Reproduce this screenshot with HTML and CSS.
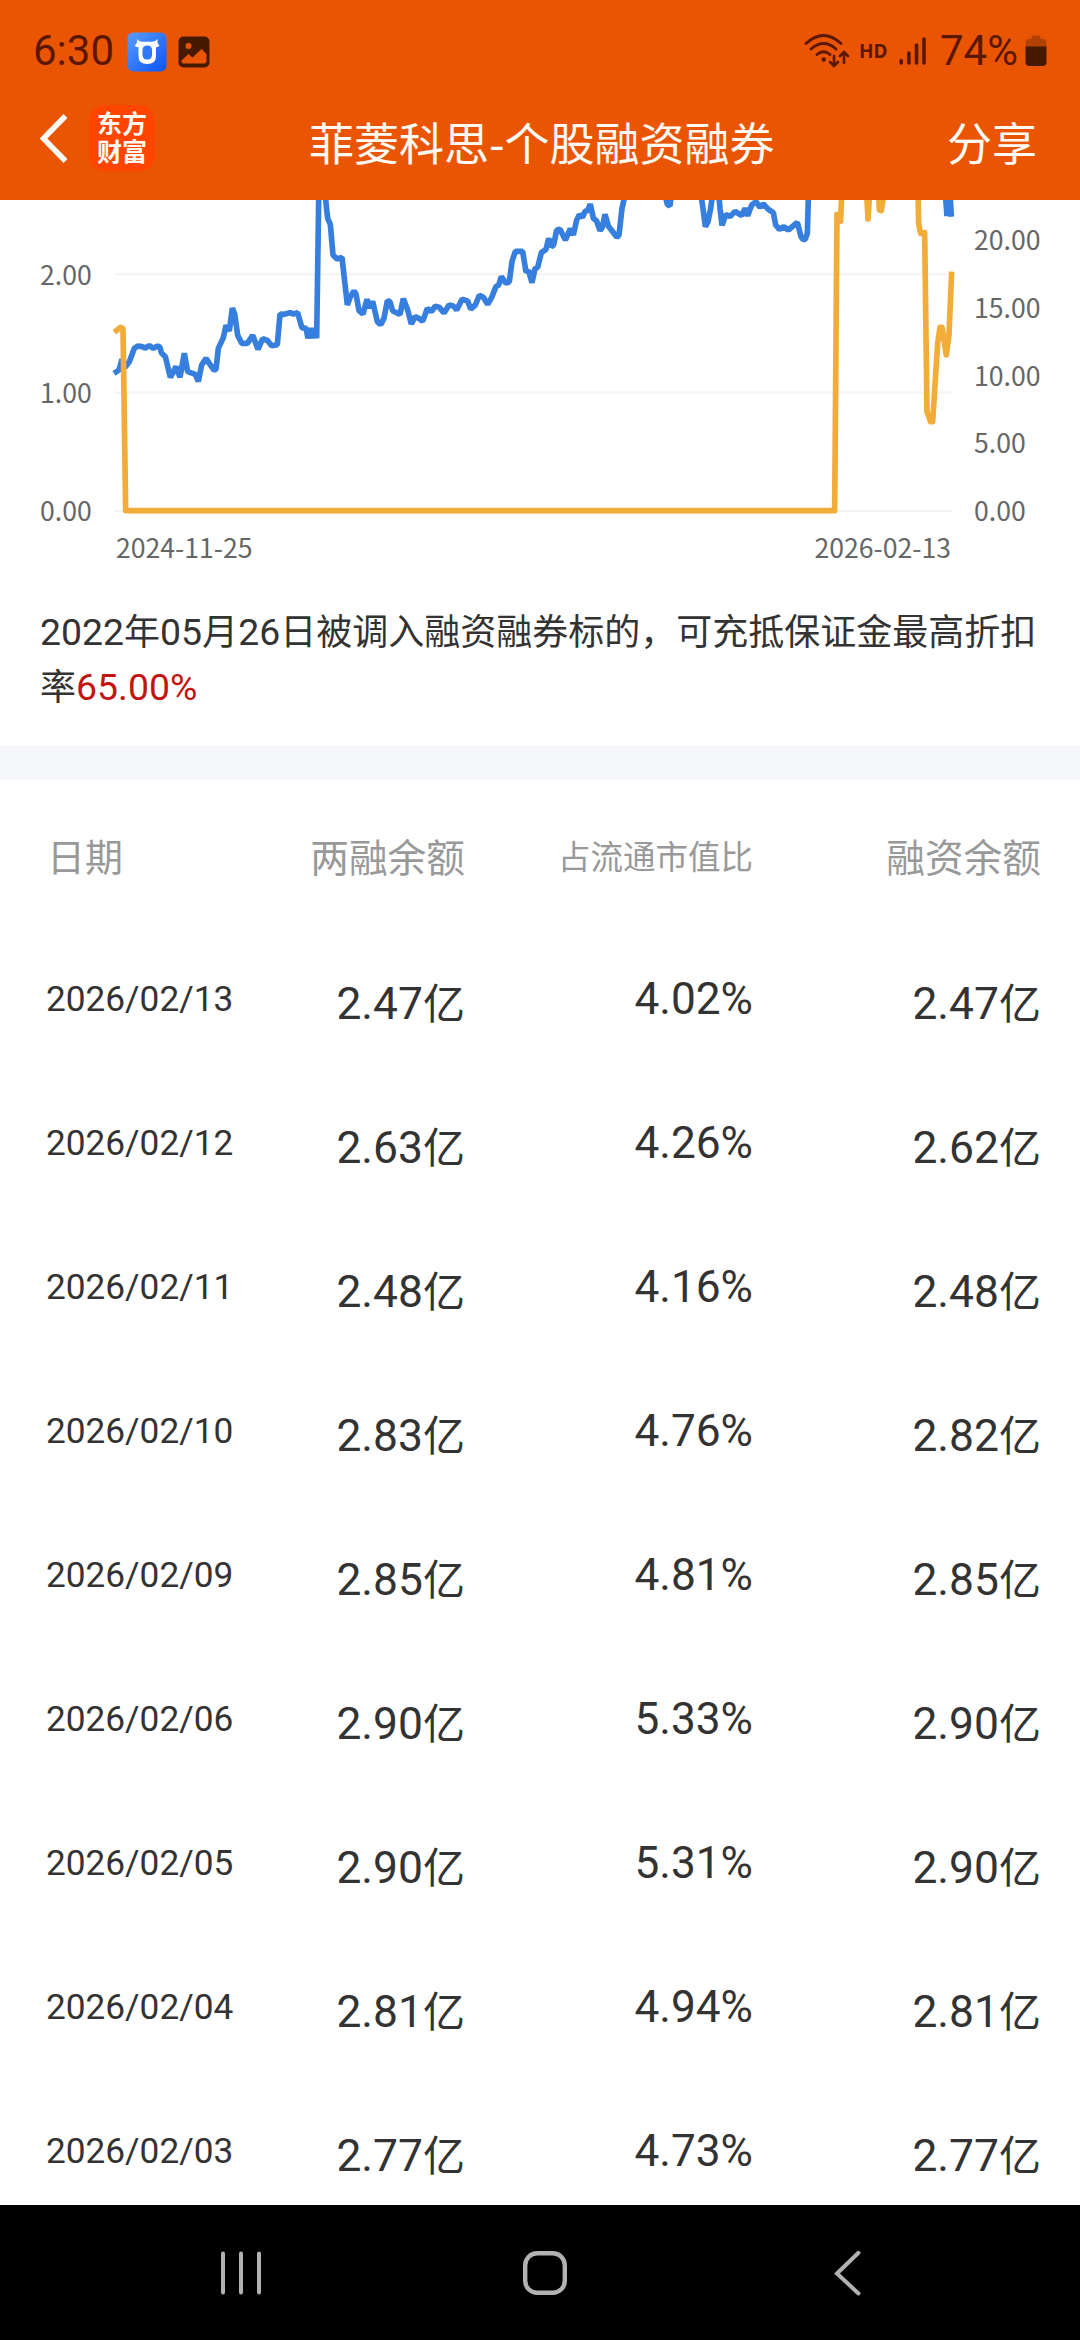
FILE: index.html
```html
<!DOCTYPE html>
<html lang="zh-CN">
<head>
<meta charset="utf-8">
<title>菲菱科思-个股融资融券</title>
<link rel="stylesheet" href="styles.css">
</head>
<body>
<div class="screen">
  <header class="top">
    <div class="status">
      <span class="clock">6:30</span>
      <svg class="app-badge" width="40" height="40" viewBox="0 0 40 40">
        <defs><linearGradient id="badge" x1="0" y1="0" x2="1" y2="1"><stop offset="0" stop-color="#5a9cff"/><stop offset="1" stop-color="#0a54f5"/></linearGradient></defs>
        <rect x="0.5" y="0.5" width="39" height="39" rx="6" fill="url(#badge)"/>
        <path d="M7.500 13.500Q10.500 12 10 7q1.500 2.500 5 2.800h10Q28.500 9.500 30.500 7q-.5 5 2 6.500-1.500 2-3.500 1.800v8.700q0 8-8.800 8T11.500 24v-8.700q-2.500.2-4-1.800z" fill="#fff"/>
        <rect x="15.500" y="13.500" width="9.500" height="14" rx="4.200" fill="#2f78fa"/>
      </svg>
      <svg class="photo" width="32" height="32" viewBox="0 0 32 32">
        <rect x="0.500" y="0.500" width="31" height="31" rx="5" fill="#471a00"/>
        <circle cx="10.500" cy="10" r="3" fill="#ea5504"/>
        <path d="M3.500 24.500 10.500 18l4 3.500L23.500 13l5 5v7.500q0 2-2 2h-21q-2 0-2-3z" fill="#ea5504"/>
      </svg>
      <span class="spacer"></span>
      <svg class="wifi" width="46" height="36" viewBox="0 0 46 36" fill="none" stroke="#5c1700" stroke-width="2.800" stroke-linecap="round">
        <path d="M2 10.500Q19.500-5.500 37 10.500M7 16q12.500-11 25 0M13 21.500q6.500-5.500 13 0"/>
        <circle cx="19.700" cy="26.500" r="2.300" fill="#5c1700" stroke="none"/>
        <path d="M30 23v9.500M26 29l4 4 4-4M40 30V20M36 23l4-4 4 4" stroke-width="2.600"/>
      </svg>
      <span class="hd">HD</span>
      <svg class="signal" width="28" height="30" viewBox="0 0 28 30" stroke="#5c1700" stroke-width="3.600" stroke-linecap="round">
        <path d="M2.200 24.500v2.500M9.900 17v10M17.500 9v18M25 3v24"/>
      </svg>
      <span class="percent">74%</span>
      <svg class="battery" width="22" height="32" viewBox="0 0 22 32">
        <path d="M6.500 4V2.500q0-2 2-2h5q2 0 2 2V4h2q4 0 4 4v4H.500V8q0-4 4-4z" fill="#b24100"/>
        <path d="M.5 11.500h21V27q0 4-4 4h-13q-4 0-4-4z" fill="#471a00"/>
      </svg>
    </div>
    <div class="nav">
      <svg class="back" width="30" height="52" viewBox="0 0 30 52" fill="none" stroke="#fffaf4" stroke-width="5.500"><path d="M27.500 4 5.500 26.500 27.500 49"/></svg>
      <div class="logo"><span>东方</span><span>财富</span></div>
      <h1 class="title">菲菱科思-个股融资融券</h1>
      <span class="share">分享</span>
    </div>
  </header>

  <section class="chart">
    <div class="axis axis-left"><span>2.00</span><span>1.00</span><span>0.00</span></div>
    <svg class="plot" width="860" height="331" viewBox="0 30 2580 993" fill="none">
      <path d="M43 253H2556M43 607.500H2556M43 963H2556" stroke="#f4f4f4" stroke-width="6"/>
      <g stroke="#367fde" stroke-width="17" stroke-linejoin="bevel">
        <path d="M42 550 57 540 66 508 75 532 88 515 103 475 113 468 126 470 136 474 148 467 160 475 173 468 180 472 184 488 196 500 211 562 228 530 240 562 253 490 263 545 286 553 295 574 305 525 318 505 330 523 342 540 348 538 355 475 370 443 378 406 388 423 397 354 404 372 413 436 425 460 442 460 458 436 474 478 488 446 503 452 515 467 532 464 540 372 552 373 570 368 580 372 593 368 606 414 618 414 624 445 632 414 638 445 644 414 650 445 656 30 662-60 672-60 678 40 683 85 691 103 699 195 711 207 726 202 742 345 751 320 762 303 768 312 777 362 789 372 801 328 809 354 818 334 832 395 842 404 852 385 862 332 870 335 878 363 900 373 910 326 923 360 934 402 945 380 958 386 968 394 982 355 994 365 1005 349 1018 352 1032 369 1047 345 1060 348 1070 360 1086 328 1103 333 1112 357 1126 345 1138 316 1150 322 1163 343 1175 322 1188 290 1196 285 1204 260 1218 280 1228 275 1236 215 1246 184 1268 184 1278 246 1286 242 1296 278 1305 236 1313 232 1324 188 1338 178 1346 145 1354 170 1361 165 1370 120 1380 118 1396 150 1411 116 1420 135 1430 90 1438 74 1447 82 1456 63 1463 62 1471 42 1480 85 1490 93 1500 122 1507 112 1515 73 1525 108 1538 125 1551 142 1557 135 1566 55 1580-5"/>
        <path d="M1695 15 1702 43 1710 48 1714 15M1802 10 1809 55 1816 110 1824 95 1832 55 1838 10M1856 10 1860 55 1866 106 1878 73 1890 80 1905 64 1925 77 1935 55 1943 77 1955 45 1968 35 1980 52 1990 42 2005 58 2020 68 2027 105 2038 118 2052 110 2065 120 2092 97 2103 140 2110 150 2116 147 2122 130 2126-10M2536 10 2541 78 2547 10 2554 80 2550 10"/>
      </g>
      <path d="M43 427 62 412 69 416 77 962H2204L2211 73 2222 94 2225 10M2300 10 2304 87 2309 10M2336 10 2338 60 2344 62 2352 10M2454 10 2456 100 2462 130 2474 128 2481 665 2492 695 2498 695 2513 460 2520 412 2526 412 2539 495 2547 435 2555 245" stroke="#f2ac38" stroke-width="17" stroke-linejoin="round"/>
    </svg>
    <div class="axis axis-right"><span>20.00</span><span>15.00</span><span>10.00</span><span>5.00</span><span>0.00</span></div>
  </section>
  <div class="dates"><span>2024-11-25</span><span>2026-02-13</span></div>

  <p class="note"><b>2022</b>年<b>05</b>月<b>26</b>日被调入融资融券标的，可充抵保证金最高折扣率<b class="red">65.00%</b></p>

  <section class="table">
    <div class="row head"><span>日期</span><span>两融余额</span><span class="small">占流通市值比</span><span>融资余额</span></div>
    <div class="row"><span class="date">2026/02/13</span><span class="amount">2.47<i>亿</i></span><span class="rate">4.02%</span><span class="amount">2.47<i>亿</i></span></div>
    <div class="row"><span class="date">2026/02/12</span><span class="amount">2.63<i>亿</i></span><span class="rate">4.26%</span><span class="amount">2.62<i>亿</i></span></div>
    <div class="row"><span class="date">2026/02/11</span><span class="amount">2.48<i>亿</i></span><span class="rate">4.16%</span><span class="amount">2.48<i>亿</i></span></div>
    <div class="row"><span class="date">2026/02/10</span><span class="amount">2.83<i>亿</i></span><span class="rate">4.76%</span><span class="amount">2.82<i>亿</i></span></div>
    <div class="row"><span class="date">2026/02/09</span><span class="amount">2.85<i>亿</i></span><span class="rate">4.81%</span><span class="amount">2.85<i>亿</i></span></div>
    <div class="row"><span class="date">2026/02/06</span><span class="amount">2.90<i>亿</i></span><span class="rate">5.33%</span><span class="amount">2.90<i>亿</i></span></div>
    <div class="row"><span class="date">2026/02/05</span><span class="amount">2.90<i>亿</i></span><span class="rate">5.31%</span><span class="amount">2.90<i>亿</i></span></div>
    <div class="row"><span class="date">2026/02/04</span><span class="amount">2.81<i>亿</i></span><span class="rate">4.94%</span><span class="amount">2.81<i>亿</i></span></div>
    <div class="row"><span class="date">2026/02/03</span><span class="amount">2.77<i>亿</i></span><span class="rate">4.73%</span><span class="amount">2.77<i>亿</i></span></div>
  </section>

  <footer class="system">
    <svg width="48" height="48" viewBox="0 0 48 48" stroke="#b2b2b2" stroke-width="4" stroke-linecap="round"><path d="M6 4.500v39M24 4.500v39M42 4.500v39"/></svg>
    <svg width="48" height="48" viewBox="0 0 48 48" fill="none" stroke="#b2b2b2" stroke-width="4.400"><rect x="4.200" y="4.200" width="39.600" height="39.600" rx="12"/></svg>
    <svg width="48" height="48" viewBox="0 0 48 48" fill="none" stroke="#b2b2b2" stroke-width="4" stroke-linecap="round"><path d="M34.500 3.800 13 24.500 34.500 44.500"/></svg>
  </footer>
</div>
</body>
</html>
```
FILE: styles.css
```css
* { box-sizing: border-box; }
body { margin: 0; background: #fff; }
b, i { font-weight: 400; font-style: normal; }
.screen {
  width: 1080px;
  height: 2340px;
  display: flex;
  flex-direction: column;
  overflow: hidden;
  background: #fff;
  font-family: Roboto, "Noto Sans CJK SC", sans-serif;
  color: #333;
}

.top { height: 200px; background: #ea5504; flex: none; }
.status {
  height: 102px;
  padding: 0 33px 0 33px;
  display: flex;
  align-items: center;
  color: #5c1700;
}
.clock { width: 94px; font-size: 42px; line-height: 48px; }
.app-badge { margin-top: 1px; }
.photo { margin: 1px 0 0 11px; }
.spacer { flex: 1; }
.wifi { margin-right: 9px; }
.hd { width: 40px; font: 700 19px/24px "Noto Sans", sans-serif; }
.signal { margin-right: 13px; }
.percent { width: 85px; font-size: 42px; line-height: 48px; white-space: nowrap; }
.battery { margin-top: -1px; }

.nav { height: 98px; padding: 0 43px 0 38px; display: flex; align-items: flex-start; color: #fffaf4; font-family: "Noto Sans CJK SC", sans-serif; }
.back { margin-top: 10px; }
.logo {
  width: 66px;
  height: 66px;
  margin: 3px 0 0 21px;
  padding-top: 3px;
  border-radius: 15px;
  background: #ff4500;
  display: flex;
  flex-direction: column;
  align-items: center;
  font-size: 25px;
  font-weight: 700;
  line-height: 28px;
}
.title { flex: 1; margin: 8px 0 0 154px; font-size: 45px; font-weight: 400; line-height: 64px; white-space: nowrap; }
.share { margin-top: 8px; font-size: 45px; line-height: 64px; }

.chart { height: 331px; display: flex; flex: none; font: 26.6px/40px "Noto Sans CJK SC", sans-serif; color: #666; }
.axis { display: flex; flex-direction: column; justify-content: space-between; }
.axis-left { width: 100px; padding: 54px 0 1px 40px; }
.axis-right { width: 120px; padding: 19px 0 1px 14px; }
.plot { display: block; flex: none; }
.dates { height: 38px; margin-top: -2px; padding: 0 129px 0 116px; display: flex; justify-content: space-between; font: 26.6px/36px "Noto Sans CJK SC", sans-serif; color: #666; flex: none; }

.note {
  height: 179px;
  margin: 0;
  padding: 35px 40px 0;
  font: 36px/55px "Noto Sans CJK SC", sans-serif;
  flex: none;
}
.note b { font-family: Roboto, sans-serif; font-size: 37.4px; line-height: 1; }
.note .red { color: #c41313; }

.table { height: 1459px; border-top: 34px solid #f6f7fb; overflow: hidden; flex: none; }
.row { height: 144px; padding: 0 39px 0 45px; display: grid; grid-template-columns: 180px 240px 288px 1fr; text-align: right; align-items: start; line-height: 60px; }
.row > :first-child { text-align: left; white-space: nowrap; }
.head { height: 149px; padding-top: 45px; color: #999; font-family: "Noto Sans CJK SC", sans-serif; font-size: 38.700px; }
.head > :first-child { padding-left: 2px; font-size: 38px; }
.head .small { font-size: 32.500px; }
.date { padding: 40px 0 0 1px; font-size: 35.2px; }
.amount { padding-top: 45px; font-size: 44.4px; }
.amount i { font-family: "Noto Sans CJK SC", sans-serif; font-size: 42px; line-height: 1; }
.rate { padding-top: 40px; font-size: 44.2px; }

.system { height: 135px; background: #000; display: flex; justify-content: space-between; align-items: center; padding: 0 208px 0 217px; flex: none; }
```
